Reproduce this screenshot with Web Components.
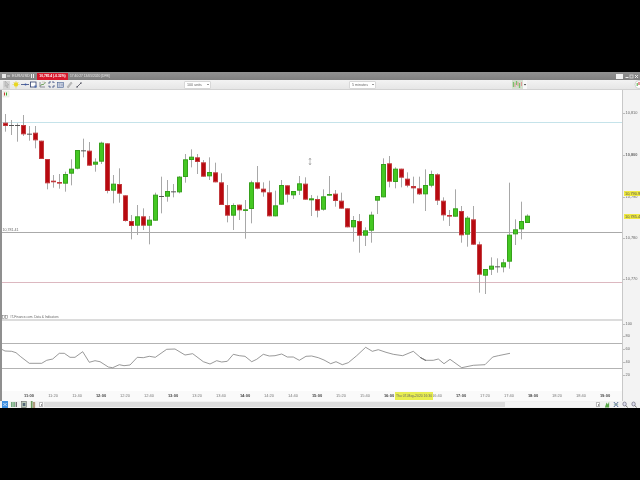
<!DOCTYPE html>
<html><head><meta charset="utf-8"><title>Chart</title>
<style>
html,body{margin:0;padding:0;background:#000;width:640px;height:480px;overflow:hidden;font-family:"Liberation Sans",Arial,sans-serif}
</style></head>
<body>
<fin-app></fin-app>
<script>
const z3=(v)=>+(110+v/3).toFixed(2), z4=(v)=>+(140+v/3).toFixed(2), z5=(v)=>+(150+v/3).toFixed(2);
const conv=(f,a)=>a.map(c=>[f(c[0]),f(c[1]),f(c[2]),f(c[3]),c[4]]);
const CANDLES=[...conv(z3,[
[38,48,12,65,'r'],[45,46,30,75,'d'],[45,46,40,95,'d'],[45,73,15,78,'r'],[71,72,48,92,'d'],[68,91,48,115,'r'],[92,147,92,147,'r'],[147,220,147,238,'r'],[212,215,195,233,'r'],[216,219,192,236,'r'],
[192,221,185,245,'g'],[176,191,148,226,'g'],[120,176,120,178,'g'],[121,122,86,142,'d'],[122,167,96,167,'r'],[155,164,145,185,'g'],[98,155,95,162,'g'],[100,243,100,250,'r'],[221,242,195,280,'g'],[222,251,175,278,'r'],
[256,333,256,335,'r'],[333,348,315,388,'r'],[319,347,285,375,'g'],[319,347,295,360,'r'],[329,347,318,403,'g'],[254,332,248,332,'g'],[258,259,200,310,'d'],[243,260,210,275,'g'],[244,245,222,262,'d'],[200,247,198,250,'g'],
[148,201,132,218,'g'],[140,150,118,172,'g'],[142,156,132,192,'r'],[157,200,150,200,'r'],[186,199,142,210,'g']]),
...conv(z4,[
[97,127,68,127,'r'],[127,195,100,195,'r'],[195,227,135,247,'r'],[195,227,190,270,'g'],[194,211,194,240,'r'],[208,211,180,296,'g'],[127,207,122,250,'g'],[127,146,78,148,'r'],[146,157,127,170,'r'],[157,229,122,229,'r'],
[196,229,152,229,'g'],[135,194,120,194,'g'],[136,164,136,187,'r'],[153,166,153,177,'g'],[130,152,108,165,'g'],[131,179,112,179,'r'],[175,181,165,228,'g'],[177,212,167,232,'r'],[169,209,148,212,'g'],[162,167,108,167,'g'],
[161,183,150,200,'r'],[182,206,158,206,'r'],[205,262,205,262,'r'],[240,262,228,305,'g'],[243,287,222,338,'r'],[271,287,262,318,'g'],[224,272,215,308,'g'],[168,182,168,222,'g'],[72,172,55,172,'g'],[70,125,48,142,'r'],
[86,126,82,145,'g'],[86,113,86,142,'r'],[116,137,97,142,'r'],[138,145,110,190,'r'],[145,163,110,165,'r'],[135,163,88,213,'g']]),
...conv(z5,[
[72,107,62,112,'g'],[73,152,70,165,'r'],[152,196,142,212,'r'],[195,199,180,228,'r'],[175,200,118,200,'g'],[183,256,168,278,'r'],[203,254,198,290,'g'],[208,284,168,285,'r'],[283,374,275,428,'r'],[357,377,357,432,'g'],
[347,359,322,375,'g'],[349,350,325,368,'d'],[337,352,327,367,'g'],[254,335,98,356,'g'],[238,253,208,285,'g'],[213,238,155,268,'g'],[197,219,193,219,'g']])];
const RSI=[[5,133],[15,138],[35,139],[48,143],[62,155],[88,175],[105,175],[125,175],[140,166],[158,162],[178,145],[193,145],[210,157],[225,157],[248,140],[268,172],[285,167],[300,170],[325,186],[338,188],[358,179],[372,182],[390,180],[412,157],[430,158],[448,154],[466,157],[500,133],[525,132],[555,150],[578,146],[610,170],[630,177]]
.map(p=>[p[0]/3,305+p[1]/3]).concat(
[[20,167],[35,171],[52,169],[70,148],[88,152],[105,154],[125,170],[140,163],[160,148],[178,153],[195,152],[215,147],[232,156],[250,156],[268,166],[288,154],[305,153],[325,158],[342,165],[362,176],[378,170],[397,179],[415,173],[440,152],[467,127],[487,139],[505,134],[528,142],[550,148],[578,152],[610,139],[632,158],[648,167]].map(p=>[210+p[0]/3,305+p[1]/3]),
[[0,157],[18,166],[40,166],[55,162],[72,176],[90,163],[125,188],[160,181],[195,179],[218,156],[235,152],[270,145]].map(p=>[420+p[0]/3,305+p[1]/3]));

function el(name,css,html){
  customElements.define(name,class extends HTMLElement{
    constructor(){super();this.attachShadow({mode:'open'}).innerHTML=`<style>${css}</style>${typeof html==='function'?html():html}`;}
  });
}
el('title-bar',`
:host{display:flex;align-items:center;height:8px;background:linear-gradient(#929292,#808080);color:#e2e2e2;font-size:3.8px;line-height:8px;white-space:nowrap}
.ic{display:flex;align-items:center;margin-left:2px;width:10px}
.sym{width:19px;font-size:4px}
.pause{display:flex;gap:1px;width:6px}.pause i{width:1px;height:4px;background:#eee}
.badge{background:#d8182c;color:#fff;font-weight:bold;padding:0 1px;height:7px;line-height:7px;width:29px;margin-right:2px;font-size:3.3px;text-align:center}
.time{font-size:3.3px}
.sp{flex:1}
.right{display:flex;align-items:center}
`,`<span class="ic"><svg width="9" height="6" viewBox="0 0 9 6"><rect x="0" y="1" width="4" height="4" fill="#e8e8e8"/><rect x="5" y="2.500" width="3" height="1" fill="#ddd"/></svg></span>
<span class="sym">EUR/USD</span><span class="pause"><i></i><i></i></span>
<span class="badge">10,785.4 (-0.32%)</span><span class="time">17:40:27 13/05/2020 [DFB]</span><span class="sp"></span>
<span class="right"><svg width="24" height="7" viewBox="0 0 24 7"><rect x="0" y="1" width="7" height="5" fill="#f2f2f2"/><rect x="9.500" y="4" width="3" height="1" fill="#eee"/><rect x="14" y="2" width="3" height="3" fill="none" stroke="#ddd" stroke-width=".8"/><path d="M19 2l3 3M22 2l-3 3" stroke="#eee" stroke-width=".9"/></svg></span>`);

el('tb-select',`
:host{display:flex;align-items:center;justify-content:space-between;box-sizing:border-box;width:27px;height:8px;background:#fff;border:1px solid #d8d8d8;border-radius:1px;font-size:3.7px;color:#666;padding:0 1px 0 2px;white-space:nowrap}
i{width:0;height:0;border:1.3px solid transparent;border-top:1.6px solid #333;border-bottom:0}
`,`<slot></slot><i></i>`);

el('tool-bar',`
:host{display:flex;align-items:center;height:10px;box-sizing:border-box;background:linear-gradient(#f3f3f3,#e6e6e6);border-bottom:1px solid #d2d2d2;padding-left:3px}
.icons{display:flex;align-items:center;width:181px}
svg{display:block;flex:none}
.b{width:9px;display:flex;justify-content:center}
.b.on{background:#d6d6d6;height:8px;width:7px;align-items:center;margin-right:1px}
.g1{width:138px}
.chart{margin-left:auto;margin-right:113px;display:flex;align-items:center}
`,`<div class="icons">
<span class="b on"><svg width="6" height="7" viewBox="0 0 6 7"><path d="M1 0l4 4H3l1 2.500-1 .4L2 4.400 1 5.500z" fill="#c8c8c8" stroke="#999" stroke-width=".4"/></svg></span>
<span class="b"><svg width="8" height="8" viewBox="0 0 8 8"><circle cx="4" cy="3.500" r="2.200" fill="#e8d620"/><path d="M4 0v1M4 6v1.500M.5 3.500h1M6.500 3.500h1M1.500 1l1 1M6.500 1l-1 1" stroke="#dccc30" stroke-width=".6"/></svg></span>
<span class="b"><svg width="8" height="5" viewBox="0 0 8 5"><path d="M0 2.500h8" stroke="#33457d" stroke-width=".8"/><circle cx="4.500" cy="2.500" r="1" fill="#3b5aa8"/></svg></span>
<span class="b"><svg width="7" height="7" viewBox="0 0 7 7"><rect x=".5" y="1" width="5.500" height="5" fill="#fff" stroke="#30406f" stroke-width=".8"/><rect x="4.500" y="4.500" width="2" height="2" fill="#4a6ab0"/></svg></span>
<span class="b"><svg width="7" height="7" viewBox="0 0 7 7"><path d="M1 1v5h5" fill="none" stroke="#667" stroke-width=".7"/><path d="M1.500 5L3 3l1 1 2.500-3" fill="none" stroke="#4a8a30" stroke-width=".7"/><path d="M3 1h3v2" stroke="#aa9" fill="none" stroke-width=".5"/></svg></span>
<span class="b"><svg width="7" height="7" viewBox="0 0 7 7"><path d="M1 3V1h2M4 1h2v1M6 4v2H4M3 6H1V4.500" fill="none" stroke="#3b4d80" stroke-width=".8"/></svg></span>
<span class="b"><svg width="7" height="6" viewBox="0 0 7 6"><rect x=".5" y=".5" width="6" height="5" fill="#d8e2f2" stroke="#47608f" stroke-width=".6"/><path d="M1.500 2h2M1.500 4h2M5 1.500v3" stroke="#335" stroke-width=".5"/></svg></span>
<span class="b"><svg width="7" height="8" viewBox="0 0 7 8"><path d="M1 6l4-5 1.200 1-4 5z" fill="#bdbdbd" stroke="#999" stroke-width=".4"/></svg></span>
<span class="b"><svg width="6" height="6" viewBox="0 0 6 6"><path d="M1 5l4-4" stroke="#334" stroke-width=".7"/><circle cx="1" cy="5" r=".7" fill="#334"/><circle cx="5" cy="1" r=".7" fill="#334"/></svg></span>
</div>
<tb-select>100 units</tb-select><span class="g1"></span><tb-select>5 minutes</tb-select>
<span class="chart"><svg width="11" height="9" viewBox="0 0 11 9"><rect width="11" height="9" fill="#d6dfd0"/><path d="M1.500 2v5M4.500 1v4M7.500 3v5" stroke="#7cc06c" stroke-width="1.300"/><path d="M3 3v4M6 2v4M9.500 2v4" stroke="#e09a9a" stroke-width="1"/></svg><svg width="4" height="9" viewBox="0 0 4 9" style="background:#f8f8f8"><path d="M.8 4h2.400L2 5.500z" fill="#333"/></svg></span>
<svg width="6" height="9" viewBox="0 0 6 9" style="position:absolute;right:0"><circle cx="5" cy="4.500" r="4" fill="#fff" stroke="#aaa" stroke-width=".5"/><path d="M3.200 3v3" stroke="#46a83a" stroke-width="1"/><path d="M5 2v3" stroke="#c33" stroke-width="1"/></svg>`);

el('price-plot',`
:host{display:block;position:relative;height:229px;background:#fff}
svg{display:block;position:absolute;inset:0}
.tag{position:absolute;font-size:3.6px;color:#666;white-space:nowrap;line-height:6px}
`,()=>{
 let s='';
 CANDLES.forEach((c,i)=>{
  const x=5+i*6;
  s+=`<rect x="${x}" y="${c[2]}" width="1" height="${(c[3]-c[2]).toFixed(2)}" fill="#a8a8a8"/>`;
  if(c[4]==='d'){s+=`<rect x="${x-2}" y="${c[0]}" width="5" height="1" fill="#555"/>`;return;}
  const f=c[4]==='r'?'#b80a10':'#44c822', st=c[4]==='r'?'#c23a3e':'#36a01c';
  s+=`<rect x="${x-1.5}" y="${c[0]+.5}" width="4" height="${Math.max(c[1]-c[0]-1,.6).toFixed(2)}" fill="${f}" stroke="${st}" stroke-width="1"/>`;
 });
 return `<svg width="620" height="229" viewBox="2 90 620 229">
 <line x1="2" x2="622" y1="122.500" y2="122.500" stroke="#c5e3ea"/>
 <line x1="2" x2="622" y1="232.500" y2="232.500" stroke="#aaa"/>
 <line x1="2" x2="622" y1="282.500" y2="282.500" stroke="#dcb8c0"/>
 ${s}
 <path d="M309 158.500h2M310 158.500v6M309 164.500h2M308.800 160l1.200-1.500 1.200 1.500M308.800 163l1.200 1.500 1.200-1.500" stroke="#b0b0b0" stroke-width=".8" fill="none"/>
 <rect x="3" y="91" width="6" height="6" fill="#f2f7ea" stroke="#ddd" stroke-width=".5"/><path d="M4.500 92.500v3" stroke="#c33" stroke-width="1"/><path d="M6.500 92.500v3" stroke="#3a3" stroke-width="1"/>
 <rect x="2.500" y="315.500" width="2" height="3" fill="none" stroke="#777" stroke-width=".5"/><rect x="5.500" y="315.500" width="2" height="3" fill="none" stroke="#777" stroke-width=".5"/>
 </svg>
 <span class="tag" style="left:.5px;top:137px">10,781.41</span>
 <span class="tag" style="left:8.500px;top:224px;font-size:3.200px">IT-Finance.com. Data &amp; Indicators</span>`;
});

el('rsi-plot',`:host{display:block;height:70px;background:#fff}svg{display:block}`,
`<svg width="620" height="70" viewBox="2 321 620 70">
<line x1="2" x2="622" y1="343.500" y2="343.500" stroke="#b3b3b3"/>
<line x1="2" x2="622" y1="368.500" y2="368.500" stroke="#b3b3b3"/>
<polyline points="${RSI.map(p=>p[0].toFixed(1)+','+p[1].toFixed(1)).join(' ')}" fill="none" stroke="#777" stroke-width=".75"/>
</svg>`);

el('time-axis',`
:host{display:flex;position:relative;height:10px;background:#fafafa;padding-left:15px;font-size:4px;color:#777;line-height:9px;white-space:nowrap}
span{width:24px;flex:none;text-align:center}
b{color:#444;font-weight:bold}
.cross{position:absolute;left:393px;top:1px;width:38px;height:8px;line-height:8px;background:#e8ee50;color:#666;text-align:center;font-size:3.400px}
`,()=>{
 const t=['11:00','11:20','11:40','12:00','12:20','12:40','13:00','13:20','13:40','14:00','14:20','14:40','15:00','15:20','15:40','16:00','16:20','16:40','17:00','17:20','17:40','18:00','18:20','18:40','19:00'];
 return t.map(x=>x.endsWith(':00')?`<span><b>${x}</b></span>`:x==='16:20'?'<span></span>':`<span>${x}</span>`).join('')+'<div class="cross">Thu 07-May-2020 16:30</div>';
});

el('y-axis',`
:host{display:block;position:relative;width:18px;background:#f3f3f3;border-left:1px solid #c8c8c8;box-sizing:border-box;font-size:3.900px;color:#666;white-space:nowrap}
span{position:absolute;left:2.500px;line-height:4.500px}
span::before{content:"";position:absolute;left:-2.500px;top:2px;width:2px;height:1px;background:#bbb}
.y{background:#f0ea40;color:#555;left:1px;width:16px;padding-left:1px;box-sizing:border-box;line-height:5px}
.y::before{display:none}
`,`<span style="top:21px">10,810</span><span style="top:63px"><b>10,800</b></span><span style="top:105px">10,790</span><span style="top:146px">10,780</span><span style="top:187px">10,770</span>
<span class="y" style="top:100.500px">10,790.9</span><span class="y" style="top:123.500px">10,785.4</span>
<span style="top:232px">100</span><span style="top:244px">80</span><span style="top:257px">60</span><span style="top:270px">40</span><span style="top:283px">20</span>`);

el('status-bar',`
:host{display:flex;align-items:center;height:7px;background:#f1f1f1}
svg{display:block;flex:none}
.track{flex:1;height:5px;margin:0 1px;background:linear-gradient(90deg,#dcdcdc 0,#dcdcdc 83.600%,#f4f4f4 83.600%);box-sizing:border-box}
.arrow{width:4px;height:5px;background:#fff;border:.5px solid #bbb;box-sizing:border-box;flex:none;position:relative}
.arrow::after{content:"";position:absolute;left:1px;top:1px;border:1.200px solid transparent;border-left:1.500px solid #333;border-right:0}
.l{display:flex;align-items:center;gap:3px;width:37px;padding-left:2px}
.r{display:flex;align-items:center;gap:3px;margin:0 3px 0 4px}
`,`<span class="l">
<svg width="6" height="7" viewBox="0 0 8 7" preserveAspectRatio="none"><rect width="8" height="7" fill="#3f8fe0"/><path d="M2 2l1.500 1.500L2 5M6 2L4.500 3.500 6 5" stroke="#fff" stroke-width=".8" fill="none"/></svg>
<svg width="7" height="7" viewBox="0 0 8 7" preserveAspectRatio="none"><path d="M1 1v5M3.500 1v5" stroke="#3a8a4a" stroke-width="1.300"/><path d="M6 1v5" stroke="#555" stroke-width="1.300"/></svg>
<svg width="6" height="7" viewBox="0 0 7 7" preserveAspectRatio="none"><rect x=".5" y=".5" width="6" height="6" fill="#b8c8b8" stroke="#666" stroke-width=".6"/><rect x="2" y="2" width="3" height="3" fill="#567"/></svg>
<svg width="6" height="7" viewBox="0 0 7 7" preserveAspectRatio="none"><rect x="1" y="0" width="2" height="7" fill="#6a9a5a"/><rect x="3.500" y="1" width="2.500" height="6" fill="#b09a80"/></svg>
</span>
<span class="arrow"></span><span class="track"></span><span class="arrow"></span>
<span class="r">
<svg width="6" height="7" viewBox="0 0 7 7" preserveAspectRatio="none"><path d="M1 6.500l2-5 1.500 2 1.500-3v6z" fill="#5aa84a"/></svg>
<svg width="6" height="7" viewBox="0 0 7 7" preserveAspectRatio="none"><path d="M1 1l5 5M6 1L1 6" stroke="#47608f" stroke-width="1"/><path d="M1 3.500h5" stroke="#8a9" stroke-width=".7"/></svg>
<svg width="6" height="7" viewBox="0 0 7 7" preserveAspectRatio="none"><circle cx="3" cy="3" r="2" fill="#dde" stroke="#667" stroke-width=".7"/><path d="M4.500 4.500L6.500 6.500" stroke="#555" stroke-width=".9"/></svg>
<svg width="6" height="7" viewBox="0 0 7 7" preserveAspectRatio="none"><circle cx="3" cy="3" r="2" fill="#dde" stroke="#667" stroke-width=".7"/><path d="M4.500 4.500L6.500 6.500" stroke="#555" stroke-width=".9"/></svg>
</span>`);

el('fin-app',`
:host{display:flex;flex-direction:column;box-sizing:border-box;height:480px;padding:72px 0;background:#000;filter:blur(.4px)}
.win{flex:1;display:flex;flex-direction:column;position:relative;background:#ededed;overflow:hidden}
.body{flex:1;display:grid;grid-template-columns:2px 1fr 18px;min-height:0}
.edge{background:#8f8f8f}
.col{display:flex;flex-direction:column;min-width:0}
.sep{height:2px;background:#dcdcdc}
`,`<div class="win"><title-bar></title-bar><tool-bar></tool-bar>
<div class="body"><div class="edge"></div>
<div class="col"><price-plot></price-plot><div class="sep"></div><rsi-plot></rsi-plot><time-axis></time-axis></div>
<y-axis></y-axis></div>
<status-bar></status-bar></div>`);
</script>
</body></html>
